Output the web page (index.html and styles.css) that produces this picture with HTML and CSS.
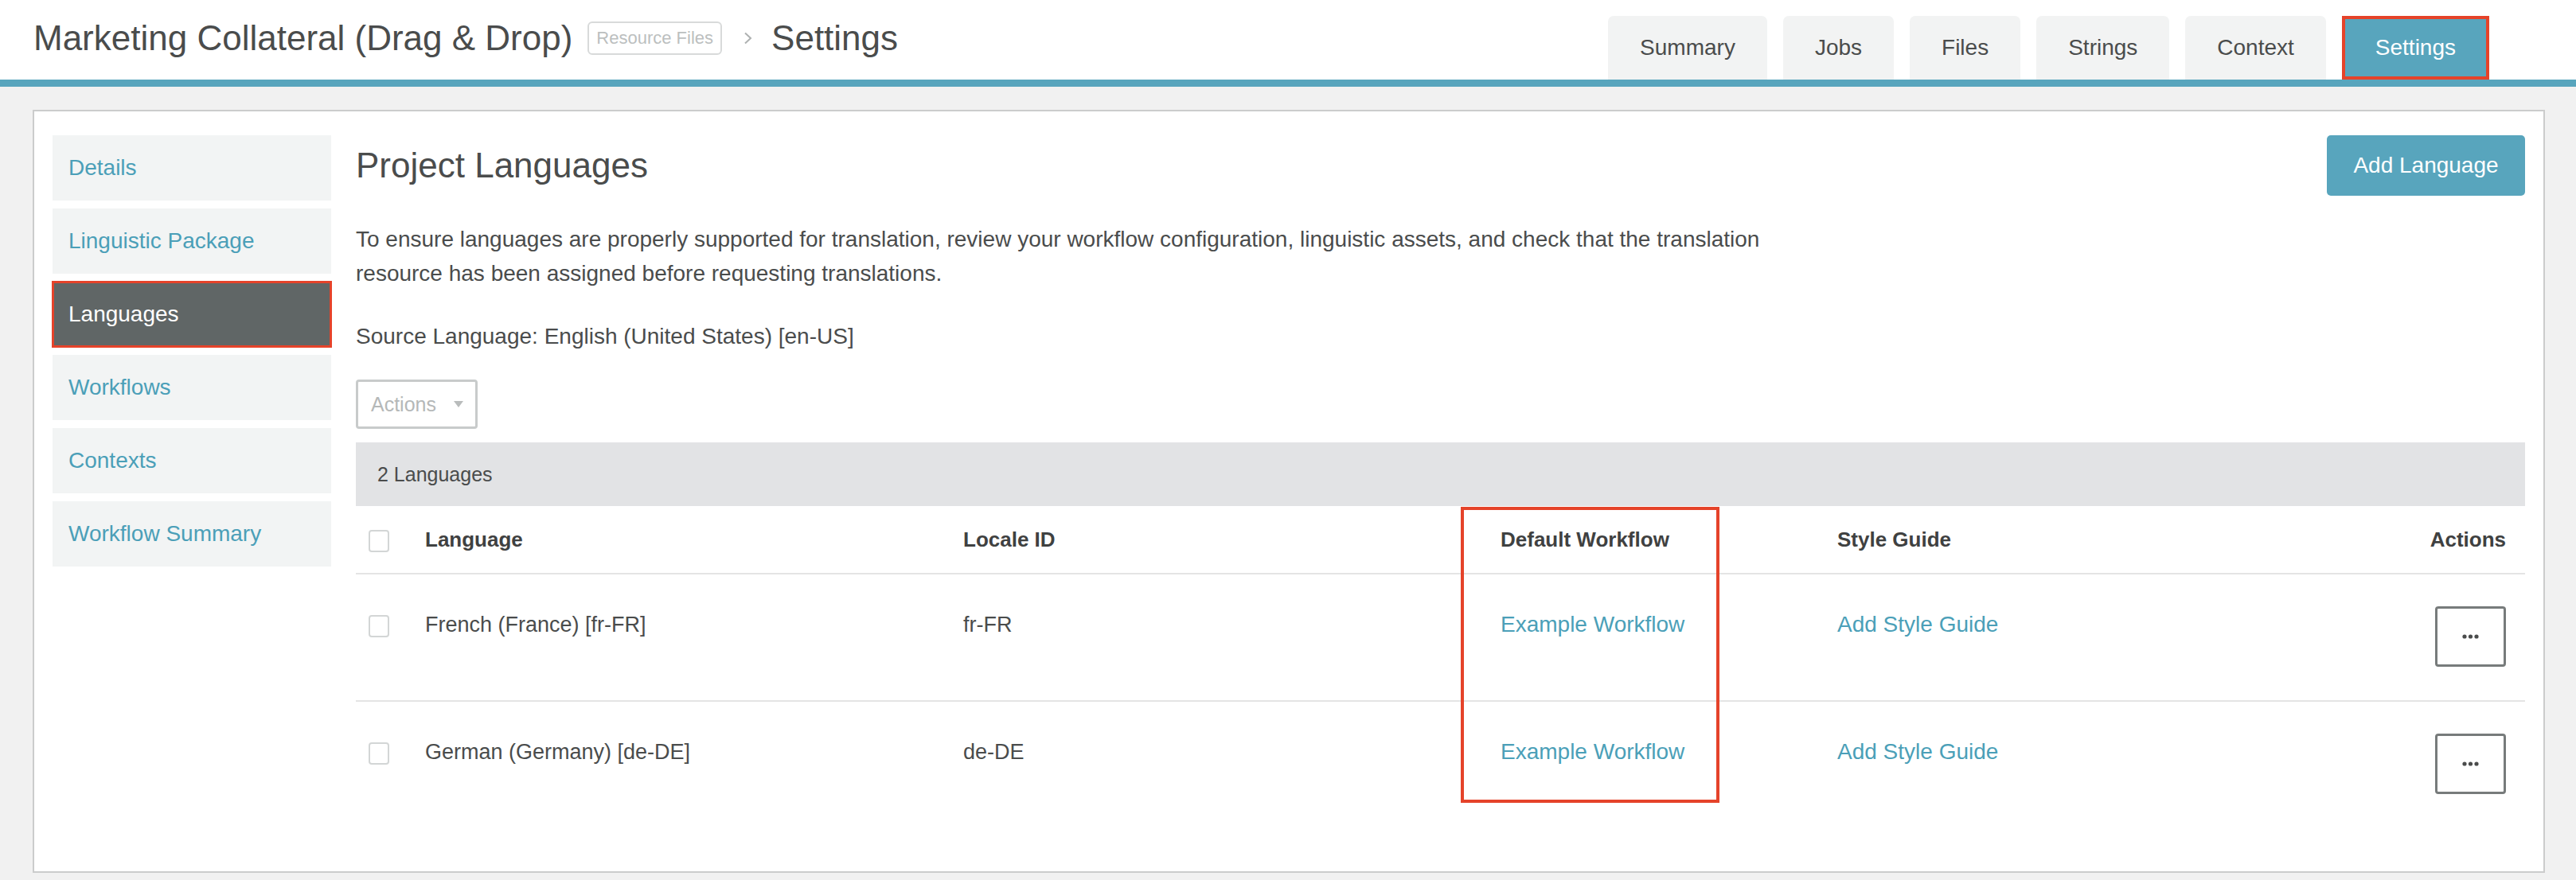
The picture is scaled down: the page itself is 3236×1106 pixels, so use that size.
FILE: index.html
```html
<!DOCTYPE html>
<html lang="en">
<head>
	<meta charset="UTF-8">
	<title>Settings - Marketing Collateral (Drag &amp; Drop)</title>
	<link rel="stylesheet" href="styles.css">
</head>
<body>
	<header class="topbar">
		<div class="crumbs">
			<h1 class="project-name">Marketing Collateral (Drag &amp; Drop)</h1>
			<span class="tag">Resource Files</span>
			<svg class="crumb-sep" width="12" height="16" viewBox="0 0 12 16"><path d="M2 1.5 L9 8 L2 14.5" fill="none" stroke="#aeb1b1" stroke-width="2"/></svg>
			<span class="page-name">Settings</span>
		</div>
		<ul class="tabs">
			<li>Summary</li>
			<li>Jobs</li>
			<li>Files</li>
			<li>Strings</li>
			<li>Context</li>
			<li class="on">Settings</li>
		</ul>
	</header>

	<div class="panel">
		<ul class="side-nav">
			<li>Details</li>
			<li>Linguistic Package</li>
			<li class="on">Languages</li>
			<li>Workflows</li>
			<li>Contexts</li>
			<li>Workflow Summary</li>
		</ul>

		<div class="content">
			<div class="content-head">
				<h2>Project Languages</h2>
				<button type="button" class="btn-add">Add Language</button>
			</div>
			<p class="intro">To ensure languages are properly supported for translation, review your workflow configuration, linguistic assets, and check that the translation resource has been assigned before requesting translations.</p>
			<p class="source">Source Language: English (United States) [en-US]</p>

			<div class="actions-select">
				<span>Actions</span>
				<svg width="12" height="8" viewBox="0 0 12 8"><path d="M0 0 H12 L6 8 Z" fill="#b9bcbc"/></svg>
			</div>

			<div class="lang-table">
				<div class="table-count">2 Languages</div>
				<table>
					<colgroup>
						<col style="width:87px">
						<col style="width:676px">
						<col style="width:675px">
						<col style="width:423px">
						<col>
						<col style="width:200px">
					</colgroup>
					<thead>
						<tr>
							<th class="c-check"><span class="check"></span></th>
							<th>Language</th>
							<th>Locale ID</th>
							<th>Default Workflow</th>
							<th>Style Guide</th>
							<th class="c-act">Actions</th>
						</tr>
					</thead>
					<tbody>
						<tr>
							<td class="c-check"><span class="check"></span></td>
							<td>French (France) [fr-FR]</td>
							<td>fr-FR</td>
							<td><a href="#">Example Workflow</a></td>
							<td><a href="#">Add Style Guide</a></td>
							<td class="c-act"><button type="button" class="more"><svg width="21" height="6" viewBox="0 0 21 6"><circle cx="3" cy="3" r="2.6"/><circle cx="10.5" cy="3" r="2.6"/><circle cx="18" cy="3" r="2.6"/></svg></button></td>
						</tr>
						<tr>
							<td class="c-check"><span class="check"></span></td>
							<td>German (Germany) [de-DE]</td>
							<td>de-DE</td>
							<td><a href="#">Example Workflow</a></td>
							<td><a href="#">Add Style Guide</a></td>
							<td class="c-act"><button type="button" class="more"><svg width="21" height="6" viewBox="0 0 21 6"><circle cx="3" cy="3" r="2.6"/><circle cx="10.5" cy="3" r="2.6"/><circle cx="18" cy="3" r="2.6"/></svg></button></td>
						</tr>
					</tbody>
				</table>
				<!-- 标注框：默认工作流列 -->
				<div class="mark-col"></div>
			</div>
		</div>
	</div>
</body>
</html>
```

FILE: styles.css
```css
/* Reset */
body,h1,h2,p,ul,li,table,th,td{ margin:0; padding:0; }
ul{ list-style:none; }
a{ text-decoration:none; }
button{ font-family:inherit; cursor:pointer; }

body{
	background:#f1f1f1;
	font-family:"Liberation Sans", Arial, sans-serif;
	color:#4a4c4c;
}

/* 顶部栏 */
.topbar{
	display:flex;
	justify-content:space-between;
	align-items:flex-end;
	height:100px;
	padding:0 109px 0 42px;
	background:#fff;
	border-bottom:9px solid #58a5bd;
}
.crumbs{
	display:flex;
	align-items:center;
	align-self:center;
	margin-bottom:5px;
}
.project-name,
.page-name{
	font-size:44px;
	font-weight:normal;
	color:#4a4c4c;
}
.tag{
	margin-left:19px;
	height:42px;
	line-height:38px;
	padding:0 9px;
	box-sizing:border-box;
	border:2px solid #d8dada;
	border-radius:6px;
	font-size:22px;
	color:#bcbfbf;
}
.crumb-sep{
	margin:0 23px 0 27px;
}
.tabs{
	display:flex;
	gap:20px;
}
.tabs li{
	height:80px;
	line-height:80px;
	padding:0 40px;
	background:#f2f3f3;
	border-radius:7px 7px 0 0;
	font-size:28px;
	color:#4a4c4c;
}
.tabs li.on{
	box-sizing:border-box;
	line-height:72px;
	padding:0 38px;
	background:#58a5bd;
	color:#fff;
	border:4px solid #e5432a;
	border-radius:0;
}

/* 主面板 */
.panel{
	display:grid;
	grid-template-columns:350px 1fr;
	column-gap:31px;
	align-items:start;
	box-sizing:border-box;
	height:959px;
	margin:29px 39px 0 41px;
	padding:30px 23px;
	background:#fff;
	border:2px solid #cbcccc;
}
.side-nav li{
	height:82px;
	line-height:82px;
	margin-bottom:10px;
	padding-left:20px;
	background:#f2f4f4;
	font-size:28px;
	color:#4b9fb8;
}
.side-nav li.on{
	background:#606666;
	color:#fff;
	outline:3px solid #e5432a;
	outline-offset:-2px;
}

.content-head{
	display:flex;
	justify-content:space-between;
	align-items:center;
	height:76px;
}
.content-head h2{
	font-size:44px;
	font-weight:normal;
	color:#4a4c4c;
}
.btn-add{
	height:76px;
	width:249px;
	border:none;
	border-radius:5px;
	background:#58a5bd;
	color:#fff;
	font-size:28px;
}
.intro{
	max-width:1830px;
	margin-top:33px;
	font-size:28px;
	line-height:43px;
}
.source{
	margin-top:36px;
	font-size:28px;
	line-height:43px;
}
.actions-select{
	display:inline-flex;
	align-items:center;
	gap:22px;
	box-sizing:border-box;
	width:153px;
	height:62px;
	margin-top:33px;
	padding-left:16px;
	border:3px solid #c8cbcb;
	border-radius:4px;
	font-size:25px;
	color:#b5b8b8;
}

/* 语言表格 */
.lang-table{
	position:relative;
	margin-top:17px;
}
.table-count{
	height:80px;
	line-height:80px;
	padding-left:27px;
	background:#e2e3e5;
	font-size:25px;
	color:#4a4c4c;
}
.lang-table table{
	width:100%;
	table-layout:fixed;
	border-collapse:collapse;
}
.lang-table th{
	height:84px;
	text-align:left;
	vertical-align:middle;
	font-size:26px;
	font-weight:bold;
	color:#3f4141;
	border-bottom:2px solid #e4e4e4;
}
.lang-table td{
	height:118px;
	padding-top:40px;
	vertical-align:top;
	line-height:46px;
	font-size:27px;
	color:#4a4c4c;
	border-bottom:2px solid #e4e4e4;
}
.lang-table tbody tr:last-child td{
	border-bottom:none;
}
.lang-table td a{
	font-size:28px;
	color:#4b9fb8;
}
.c-check{
	padding-left:16px !important;
}
.check{
	display:inline-block;
	width:26px;
	height:28px;
	box-sizing:border-box;
	border:2px solid #d3d6d6;
	border-radius:4px;
	vertical-align:middle;
}
.lang-table .c-act{
	text-align:right;
	padding-right:24px;
}
.more{
	display:inline-flex;
	align-items:center;
	justify-content:center;
	width:89px;
	height:76px;
	padding:0;
	background:#fff;
	border:3px solid #777b7b;
	border-radius:4px;
	vertical-align:top;
}
.more svg{
	fill:#4a4c4c;
}

/* 标注框 */
.mark-col{
	position:absolute;
	left:1388px;
	top:81px;
	width:325px;
	height:372px;
	box-sizing:border-box;
	border:4px solid #e5432a;
	pointer-events:none;
}
```
